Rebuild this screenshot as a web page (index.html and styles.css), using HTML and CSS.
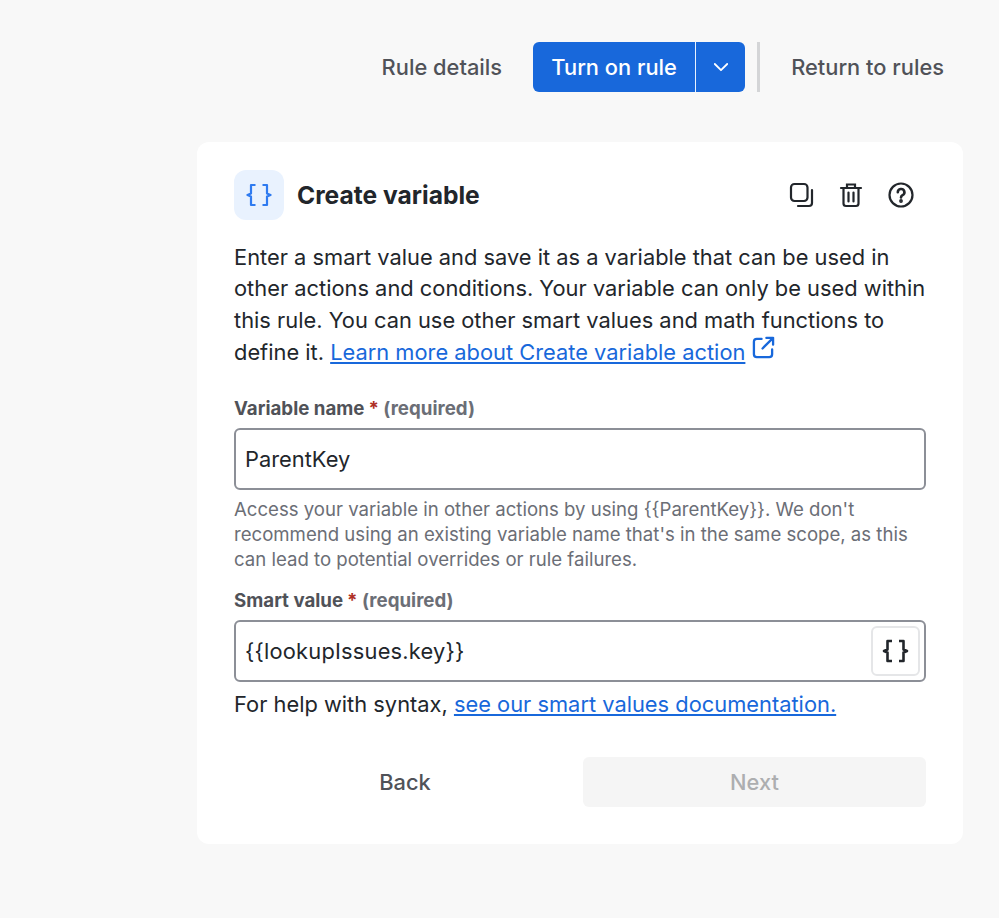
FILE: index.html
```html
<!DOCTYPE html>
<html lang="en">
<head>
  <meta charset="UTF-8" />
  <title>Create variable</title>
  <link rel="stylesheet" href="styles.css">
</head>
<body>

  <div class="topbar">
    <a class="toplink" href="#">Rule details</a>
    <div class="splitbtn">
      <button class="splitbtn-main">Turn on rule</button>
      <button class="splitbtn-arrow" aria-label="More">
        <svg width="16" height="16" viewBox="0 0 16 16" fill="none" stroke="#fff" stroke-width="1.800" stroke-linecap="round" stroke-linejoin="round"><path d="M1.800 5 8 11.200 14.200 5"/></svg>
      </button>
    </div>
    <div class="divider"></div>
    <a class="toplink toplink-return" href="#">Return to rules</a>
  </div>

  <div class="card">
    <div class="card-head">
      <div class="badge">
        <svg width="26" height="24" viewBox="0 0 26 24" fill="none" stroke="#2f7bf0" stroke-width="2.200" stroke-linejoin="round"><path d="M9.500 2H5v8.500L1.500 12 5 13.500V22h4.500M16.500 2H21v8.500l3.500 1.500L21 13.500V22h-4.500"/></svg>
      </div>
      <h2>Create variable</h2>
      <div class="head-icons">
        <svg width="26" height="26" viewBox="0 0 26 26" fill="none" stroke="#22262b" stroke-width="2.200" stroke-linecap="round"><rect x="3" y="2" width="16.500" height="17" rx="3.500"/><path d="M24 8v13a3 3 0 0 1-3 3H10"/></svg>
        <svg width="26" height="26" viewBox="0 0 26 26" fill="none" stroke="#22262b" stroke-width="2.200" stroke-linecap="round"><path d="M3 6h20M9 6V2.500h8V6M5.500 6v15.500a2.500 2.500 0 0 0 2.500 2.500h10a2.500 2.500 0 0 0 2.500-2.500V6M10.500 10.500v9M15.500 10.500v9"/></svg>
        <svg width="26" height="26" viewBox="0 0 26 26" fill="none" stroke="#22262b" stroke-width="2.200" stroke-linecap="round"><circle cx="13" cy="13" r="11.500"/><path stroke-width="2.600" d="M9.800 10.200a3.300 3.300 0 1 1 4.800 3c-1 .6-1.600 1.200-1.600 2.300"/><circle cx="13" cy="19" r=".8"/></svg>
      </div>
    </div>

    <p class="intro">Enter a smart value and save it as a variable that can be used in other actions and conditions. Your variable can only be used within this rule. You can use other smart values and math functions to define it. <a href="#">Learn more about Create variable action</a>
      <svg class="ext-icon" width="23" height="23" viewBox="0 0 24 24" fill="none" stroke="#1868db" stroke-width="2.400" stroke-linecap="round" stroke-linejoin="round"><path d="M10 3H5a3 3 0 0 0-3 3v13a3 3 0 0 0 3 3h13a3 3 0 0 0 3-3v-5M15 2h7v7M22 2 11 13"/></svg>
    </p>

    <label class="field-label">Variable name<span class="req">*</span> <span class="muted">(required)</span></label>
    <div class="input">ParentKey</div>
    <p class="hint">Access your variable in other actions by using {{ParentKey}}. We don't recommend using an existing variable name that's in the same scope, as this can lead to potential overrides or rule failures.</p>

    <label class="field-label">Smart value<span class="req">*</span> <span class="muted">(required)</span></label>
    <div class="input input-smart">
      <span class="smart-text">{{lookupIssues.key}}</span>
      <button class="smart-btn" aria-label="Insert smart value">
        <svg width="27" height="24" viewBox="0 0 26 24" fill="none" stroke="#22262b" stroke-width="2.600" stroke-linejoin="round"><path d="M9.500 2H5v8.500L1.500 12 5 13.500V22h4.500M16.500 2H21v8.500l3.500 1.500L21 13.500V22h-4.500"/></svg>
      </button>
    </div>
    <p class="syntax">For help with syntax, <a href="#">see our smart values documentation.</a></p>

    <div class="actions">
      <button class="btn-back">Back</button>
      <button class="btn-next" disabled>Next</button>
    </div>
  </div>

</body>
</html>
```

FILE: styles.css
```css
* {
  margin: 0;
  padding: 0;
  box-sizing: border-box;
}

body {
  font-family: Inter, 'Liberation Sans', sans-serif;
  background: #f8f8f8;
  color: #22262b;
  font-size: 21.850px;
  height: 918px;
  padding-top: 42px;
  overflow: hidden;
}

button {
  font-family: inherit;
  border: none;
}

a {
  color: #1868db;
}

.topbar {
  display: flex;
  align-items: center;
  justify-content: flex-end;
  height: 50px;
  padding-right: 55px;
}

.toplink {
  color: #505258;
  font-size: 21.850px;
  font-weight: 500;
  text-decoration: none;
}

.toplink-return {
  margin-left: 31px;
}

.splitbtn {
  display: flex;
  height: 50px;
  margin-left: 31px;
  border-radius: 6px;
  overflow: hidden;
}

.splitbtn-main {
  width: 163px;
  background: #1868db;
  color: #fff;
  font-size: 21.850px;
  font-weight: 500;
  border-right: 1px solid #e9f2fe;
}

.splitbtn-arrow {
  width: 49px;
  background: #1868db;
  display: flex;
  align-items: center;
  justify-content: center;
}

.divider {
  width: 3px;
  height: 50px;
  margin-left: 12px;
  background: #d4d5d7;
}

.card {
  width: 766px;
  height: 702px;
  margin: 50px 0 0 197px;
  padding: 28px 37px 0;
  background: #fff;
  border-radius: 12px;
}

.card-head {
  display: flex;
  align-items: center;
  height: 50px;
}

.badge {
  width: 50px;
  height: 50px;
  border-radius: 12px;
  background: #e9f2fe;
  display: flex;
  align-items: center;
  justify-content: center;
}

.card-head h2 {
  margin-left: 13px;
  font-size: 24.600px;
  font-weight: 700;
  flex: 1;
}

.head-icons {
  display: flex;
  gap: 24px;
  margin-right: 12px;
}

.intro {
  margin-top: 22px;
  line-height: 31.300px;
}

.ext-icon {
  vertical-align: 1px;
}

.field-label {
  display: block;
  color: #505258;
  font-size: 18.700px;
  font-weight: 700;
  line-height: 24px;
}

.intro + .field-label {
  margin-top: 29px;
}

.req {
  color: #ae2e24;
  margin-left: 4px;
}

.muted {
  color: #6b6e76;
}

.input {
  height: 62px;
  margin-top: 7px;
  padding: 1px 9px 0;
  border: 2px solid #8c8f97;
  border-radius: 6px;
  display: flex;
  align-items: center;
  justify-content: space-between;
  line-height: 1;
}

.input-smart {
  padding: 0 4px 0 9px;
}

.smart-text {
  padding-top: 2px;
  letter-spacing: .2px;
}

.smart-btn {
  width: 49px;
  height: 50px;
  background: #fff;
  border: 2px solid #e5e6e8;
  border-radius: 6px;
  display: flex;
  align-items: center;
  justify-content: center;
}

.hint {
  margin: 7px 0 17px;
  color: #6b6e76;
  font-size: 18.600px;
  line-height: 25px;
}

.syntax {
  margin-top: 7px;
  line-height: 31px;
}

.actions {
  display: grid;
  grid-template-columns: 1fr 1fr;
  margin-top: 37px;
}

.btn-back {
  width: 342px;
  height: 50px;
  background: none;
  color: #505258;
  font-size: 21.850px;
  font-weight: 500;
}

.btn-next {
  width: 343px;
  height: 50px;
  margin-left: 6px;
  background: #f5f5f5;
  color: #adaeb0;
  font-size: 21.850px;
  font-weight: 500;
  border-radius: 6px;
}
```
